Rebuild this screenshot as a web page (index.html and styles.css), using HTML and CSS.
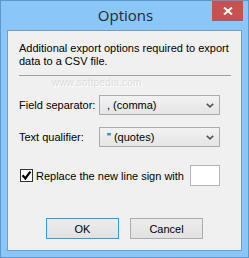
FILE: index.html
```html
<!DOCTYPE html>
<html>
<head>
<meta charset="utf-8">
<link rel="stylesheet" href="styles.css">
</head>
<body>
<div class="window">
  <div class="titlebar">
    <span class="title">Options</span>
    <div class="close">
      <svg width="10" height="8" viewBox="0 0 10 8"><path d="M1 0.5 L9 7.5 M9 0.5 L1 7.5" stroke="#fff" stroke-width="2"/></svg>
    </div>
  </div>
  <div class="content">
    <p class="desc">Additional export options required to export<br>data to a CSV file.</p>
    <div class="sep"><div class="watermark">www.softpedia.com</div></div>
    <div class="row first">
      <span class="label">Field separator:</span>
      <div class="select"><span>, (comma)</span><svg width="8" height="5" viewBox="0 0 8 5"><path d="M0.8 0.8 L4 3.8 L7.2 0.8" fill="none" stroke="#5a5a5a" stroke-width="1.7"/></svg></div>
    </div>
    <div class="row second">
      <span class="label">Text qualifier:</span>
      <div class="select"><span>" (quotes)</span><svg width="8" height="5" viewBox="0 0 8 5"><path d="M0.8 0.8 L4 3.8 L7.2 0.8" fill="none" stroke="#5a5a5a" stroke-width="1.7"/></svg></div>
    </div>
    <div class="row check">
      <span class="box"><svg width="11" height="11" viewBox="0 0 11 11"><path d="M1.6 5.2 L4.3 8.4 L9.4 1.6" fill="none" stroke="#000" stroke-width="2.2"/></svg></span>
      <span class="checklabel">Replace the new line sign with</span>
      <span class="smallinput"></span>
    </div>
    <div class="buttons">
      <div class="btn default">OK</div>
      <div class="btn">Cancel</div>
    </div>
  </div>
</div>
</body>
</html>
```
FILE: styles.css
```css
html, body {
  margin: 0;
  padding: 0;
  background: #8ac6f7;
}
.window {
  width: 249px;
  height: 258px;
  box-sizing: border-box;
  border: 1px solid #5f97cc;
  background: #8ac6f7;
  display: flex;
  flex-direction: column;
  font-family: "DejaVu Sans", sans-serif;
}
.titlebar {
  position: relative;
  height: 29px;
  display: flex;
  align-items: center;
  justify-content: center;
}
.title {
  font-family: "Open Sans", "Noto Sans", sans-serif;
  font-size: 15px;
  color: #1e2a36;
  margin-top: -1px;
  margin-left: 2px;
}
.close {
  position: absolute;
  right: 5px;
  top: 0;
  width: 31px;
  height: 20px;
  background: #c75050;
  display: flex;
  align-items: center;
  justify-content: center;
}
.content {
  flex: 1;
  margin: 0 6px 6px 6px;
  border: 1px solid #6b9fd0;
  background: #f0f0f0;
  display: flex;
  flex-direction: column;
  padding: 0 10px 0 11px;
  font-family: "Liberation Sans", Arial, sans-serif;
  font-size: 11px;
  color: #000;
  white-space: nowrap;
}
.desc {
  margin: 11px 0 0 0;
  line-height: 13px;
}
.sep {
  position: relative;
  height: 1px;
  background: #a0a0a0;
  margin-top: 7px;
}
.watermark {
  position: absolute;
  left: 33px;
  top: 2px;
  font-size: 10px;
  line-height: 12px;
  color: #dcdcdc;
  text-shadow: 1px 1px 0 #fff;
  letter-spacing: 0.2px;
}
.row {
  display: flex;
  align-items: center;
}
.row.first { margin-top: 19px; }
.row.second { margin-top: 12px; }
.label {
  width: 80px;
  flex: none;
}
.select {
  width: 121px;
  height: 20px;
  box-sizing: border-box;
  border: 1px solid #acacac;
  background: linear-gradient(#f2f2f2, #e5e5e5);
  display: flex;
  align-items: center;
  justify-content: space-between;
  padding: 0 5px 0 7px;
}
.row.check {
  margin-top: 18px;
}
.box {
  width: 13px;
  height: 13px;
  box-sizing: border-box;
  border: 1px solid #333;
  background: #fff;
  display: flex;
  align-items: center;
  justify-content: center;
  margin-left: 1px;
}
.checklabel {
  margin-left: 3px;
  flex: 1;
}
.smallinput {
  width: 30px;
  height: 21px;
  box-sizing: border-box;
  border: 1px solid #b5b5b5;
  background: #fff;
  margin-right: 11px;
}
.buttons {
  display: flex;
  justify-content: center;
  gap: 11px;
  margin-top: 32px;
  margin-left: -1px;
}
.btn {
  width: 73px;
  height: 21px;
  box-sizing: border-box;
  border: 1px solid #adadad;
  background: linear-gradient(#ececec, #e2e2e2);
  display: flex;
  align-items: center;
  justify-content: center;
}
.btn.default {
  border-color: #3399e8;
}
```
